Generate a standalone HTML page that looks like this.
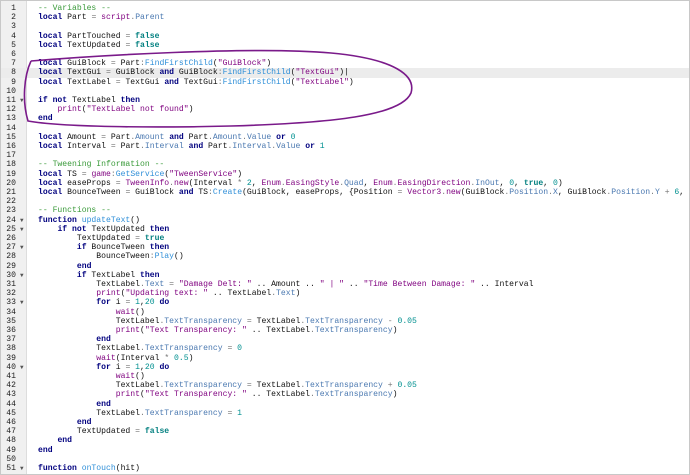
<!DOCTYPE html>
<html><head><meta charset="utf-8"><style>
html,body{margin:0;padding:0;background:#fff}
#w{position:relative;width:688px;height:473px;border:1px solid #c8c8c8;overflow:hidden;background:#fff}
#g{position:absolute;left:0;top:0;width:25px;height:473px;background:#f0f0f0;border-right:1px solid #ddd}
.l{position:absolute;left:0;height:9.2px;line-height:9.2px;white-space:pre;font-family:"Liberation Mono",monospace;font-size:8.1px;color:#111;width:690px}
.n{position:absolute;left:0;width:15px;text-align:right;color:#222}
.f{position:absolute;left:19px;color:#555;font-size:6px}
.c{position:absolute;left:37px}
.k{color:#00007f;font-weight:bold}
.cm{color:#3a9a3a}
.s{color:#7f007f}
.p{color:#4a78b0}
.m{color:#2f8fd8}
.d{color:#009090}
.b{color:#007f7f;font-weight:bold}
.o{color:#777}
.hl{background:#ececec}
</style></head><body><div id="w"><div id="g"></div>
<div id="code"></div>
<svg style="position:absolute;left:0;top:0" width="690" height="475"><path d="M30 60 C90 55 250 45 330 52 C395 58 415 75 410 92 C400 115 330 122 230 125 C150 127 60 126 27 120 C21 100 23 75 30 60" fill="none" stroke="#7a1a8a" stroke-width="1.6"/></svg>
</div>
<script>
var L=[
'<span class=cm>-- Variables --</span>',
'<span class=k>local</span> Part <span class=o>=</span> <span class=s>script</span><span class=o>.</span><span class=p>Parent</span>',
'',
'<span class=k>local</span> PartTouched <span class=o>=</span> <span class=b>false</span>',
'<span class=k>local</span> TextUpdated <span class=o>=</span> <span class=b>false</span>',
'',
'<span class=k>local</span> GuiBlock <span class=o>=</span> Part<span class=o>:</span><span class=m>FindFirstChild</span>(<span class=s>"GuiBlock"</span>)',
'<span class=k>local</span> TextGui <span class=o>=</span> GuiBlock <span class=k>and</span> GuiBlock<span class=o>:</span><span class=m>FindFirstChild</span>(<span class=s>"TextGui"</span>)|',
'<span class=k>local</span> TextLabel <span class=o>=</span> TextGui <span class=k>and</span> TextGui<span class=o>:</span><span class=m>FindFirstChild</span>(<span class=s>"TextLabel"</span>)',
'',
'<span class=k>if not</span> TextLabel <span class=k>then</span>',
'    <span class=s>print</span>(<span class=s>"TextLabel not found"</span>)',
'<span class=k>end</span>',
'',
'<span class=k>local</span> Amount <span class=o>=</span> Part<span class=o>.</span><span class=p>Amount</span> <span class=k>and</span> Part<span class=o>.</span><span class=p>Amount</span><span class=o>.</span><span class=p>Value</span> <span class=k>or</span> <span class=d>0</span>',
'<span class=k>local</span> Interval <span class=o>=</span> Part<span class=o>.</span><span class=p>Interval</span> <span class=k>and</span> Part<span class=o>.</span><span class=p>Interval</span><span class=o>.</span><span class=p>Value</span> <span class=k>or</span> <span class=d>1</span>',
'',
'<span class=cm>-- Tweening Information --</span>',
'<span class=k>local</span> TS <span class=o>=</span> <span class=s>game</span><span class=o>:</span><span class=m>GetService</span>(<span class=s>"TweenService"</span>)',
'<span class=k>local</span> easeProps <span class=o>=</span> <span class=s>TweenInfo</span><span class=o>.</span><span class=s>new</span>(Interval <span class=o>*</span> <span class=d>2</span>, <span class=s>Enum</span><span class=o>.</span><span class=s>EasingStyle</span><span class=o>.</span><span class=p>Quad</span>, <span class=s>Enum</span><span class=o>.</span><span class=s>EasingDirection</span><span class=o>.</span><span class=p>InOut</span>, <span class=d>0</span>, <span class=b>true</span>, <span class=d>0</span>)',
'<span class=k>local</span> BounceTween <span class=o>=</span> GuiBlock <span class=k>and</span> TS<span class=o>:</span><span class=m>Create</span>(GuiBlock, easeProps, {Position <span class=o>=</span> <span class=s>Vector3</span><span class=o>.</span><span class=s>new</span>(GuiBlock<span class=o>.</span><span class=p>Position</span><span class=o>.</span><span class=p>X</span>, GuiBlock<span class=o>.</span><span class=p>Position</span><span class=o>.</span><span class=p>Y</span> <span class=o>+</span> <span class=d>6</span>,',
'',
'<span class=cm>-- Functions --</span>',
'<span class=k>function</span> <span class=m>updateText</span>()',
'    <span class=k>if not</span> TextUpdated <span class=k>then</span>',
'        TextUpdated <span class=o>=</span> <span class=b>true</span>',
'        <span class=k>if</span> BounceTween <span class=k>then</span>',
'            BounceTween<span class=o>:</span><span class=m>Play</span>()',
'        <span class=k>end</span>',
'        <span class=k>if</span> TextLabel <span class=k>then</span>',
'            TextLabel<span class=o>.</span><span class=p>Text</span> <span class=o>=</span> <span class=s>"Damage Delt: "</span> .. Amount .. <span class=s>" | "</span> .. <span class=s>"Time Between Damage: "</span> .. Interval',
'            <span class=s>print</span>(<span class=s>"Updating text: "</span> .. TextLabel<span class=o>.</span><span class=p>Text</span>)',
'            <span class=k>for</span> i <span class=o>=</span> <span class=d>1</span>,<span class=d>20</span> <span class=k>do</span>',
'                <span class=s>wait</span>()',
'                TextLabel<span class=o>.</span><span class=p>TextTransparency</span> <span class=o>=</span> TextLabel<span class=o>.</span><span class=p>TextTransparency</span> <span class=o>-</span> <span class=d>0.05</span>',
'                <span class=s>print</span>(<span class=s>"Text Transparency: "</span> .. TextLabel<span class=o>.</span><span class=p>TextTransparency</span>)',
'            <span class=k>end</span>',
'            TextLabel<span class=o>.</span><span class=p>TextTransparency</span> <span class=o>=</span> <span class=d>0</span>',
'            <span class=s>wait</span>(Interval <span class=o>*</span> <span class=d>0.5</span>)',
'            <span class=k>for</span> i <span class=o>=</span> <span class=d>1</span>,<span class=d>20</span> <span class=k>do</span>',
'                <span class=s>wait</span>()',
'                TextLabel<span class=o>.</span><span class=p>TextTransparency</span> <span class=o>=</span> TextLabel<span class=o>.</span><span class=p>TextTransparency</span> <span class=o>+</span> <span class=d>0.05</span>',
'                <span class=s>print</span>(<span class=s>"Text Transparency: "</span> .. TextLabel<span class=o>.</span><span class=p>TextTransparency</span>)',
'            <span class=k>end</span>',
'            TextLabel<span class=o>.</span><span class=p>TextTransparency</span> <span class=o>=</span> <span class=d>1</span>',
'        <span class=k>end</span>',
'        TextUpdated <span class=o>=</span> <span class=b>false</span>',
'    <span class=k>end</span>',
'<span class=k>end</span>',
'',
'<span class=k>function</span> <span class=m>onTouch</span>(hit)'
];
var folds={11:1,24:1,25:1,27:1,30:1,33:1,40:1,51:1};
var h='';
for(var i=0;i<L.length;i++){var n=i+1;
h+='<div class="l'+(n==8?' hl':'')+'" style="top:'+(3+i*9.2).toFixed(1)+'px"><span class=n>'+n+'</span>'+(folds[n]?'<span class=f>▼</span>':'')+'<span class=c>'+L[i]+'</span></div>';}
document.getElementById('code').innerHTML=h;
</script>
</body></html>
